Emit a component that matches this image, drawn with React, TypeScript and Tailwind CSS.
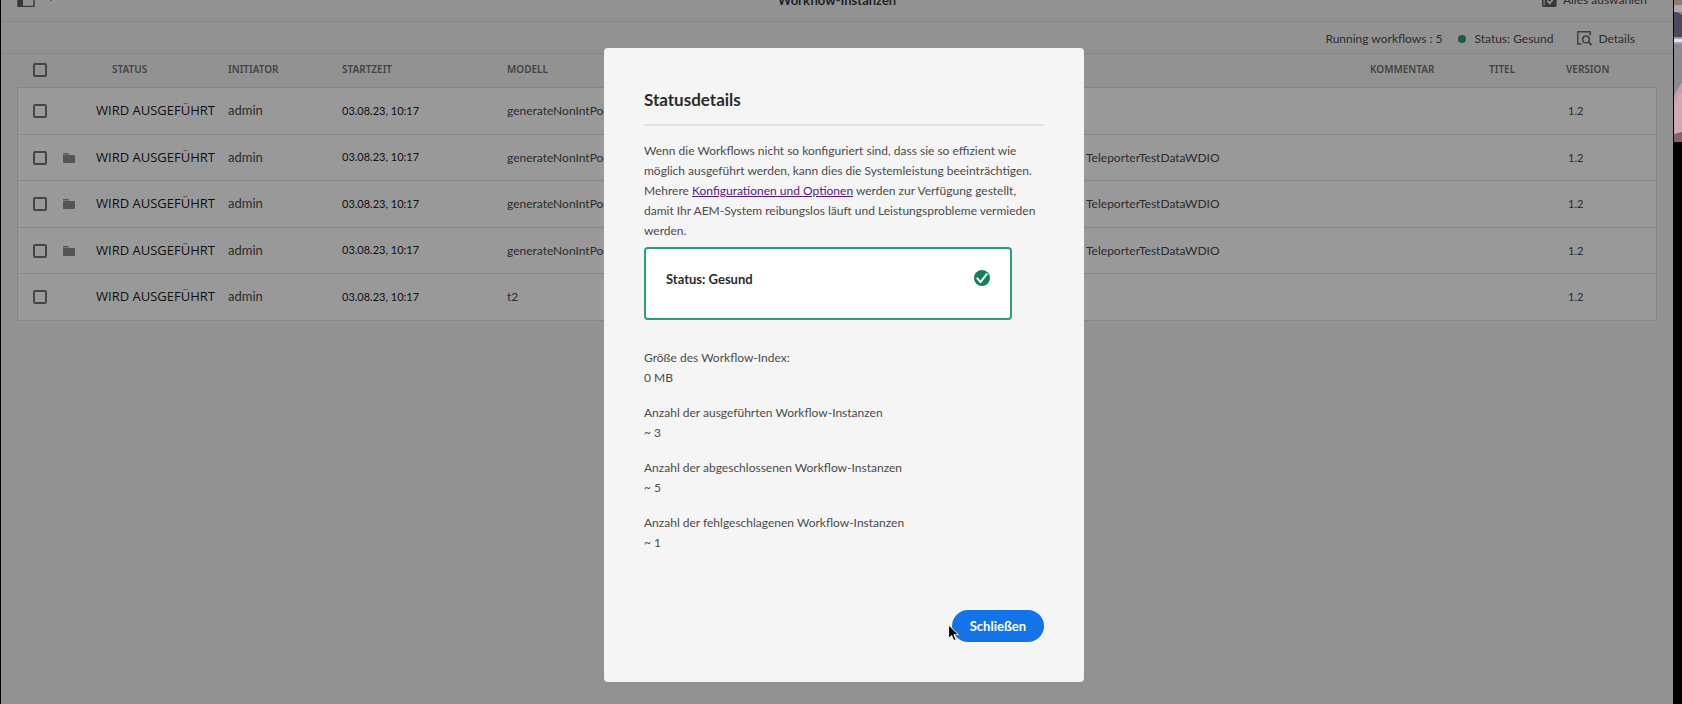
type Instance = {
  folder: boolean;
  model: string;
  payload: string;
};

const instances: Instance[] = [
  { folder: false, model: "generateNonIntPod", payload: "" },
  { folder: true, model: "generateNonIntPod", payload: "TeleporterTestDataWDIO" },
  { folder: true, model: "generateNonIntPod", payload: "TeleporterTestDataWDIO" },
  { folder: true, model: "generateNonIntPod", payload: "TeleporterTestDataWDIO" },
  { folder: false, model: "t2", payload: "" },
];

const stats = [
  { label: "Größe des Workflow-Index:", value: "0 MB" },
  { label: "Anzahl der ausgeführten Workflow-Instanzen", value: "~ 3" },
  { label: "Anzahl der abgeschlossenen Workflow-Instanzen", value: "~ 5" },
  { label: "Anzahl der fehlgeschlagenen Workflow-Instanzen", value: "~ 1" },
];

function FolderIcon() {
  return (
    <svg viewBox="0 0 12 10" className="h-2.5 w-3" fill="#8e8e8e" aria-hidden="true">
      <path d="M0 .8A.8.8 0 0 1 .8 0h4.4l1.3 1.4H0z" />
      <path d="M0 1.9h11.3a.7.7 0 0 1 .7.7v6.6a.8.8 0 0 1-.8.8H.8a.8.8 0 0 1-.8-.8z" />
    </svg>
  );
}

function Checkbox({ label }: { label: string }) {
  return (
    <input
      type="checkbox"
      aria-label={label}
      className="block size-3.5 appearance-none rounded-xs border-2 border-[#747474] bg-transparent"
    />
  );
}

function PageHeader() {
  return (
    <header className="h-[22px] overflow-hidden border-b border-[#dcdcdc]">
      <div className="-mt-2.5 grid h-5 grid-cols-3 items-center text-[13px] leading-5">
        <button type="button" aria-label="Leiste" className="flex items-center gap-3 justify-self-start pl-4">
          <svg viewBox="0 0 18 16" className="h-4 w-[18px]" aria-hidden="true">
            <path d="M1 1h16v13.4H1z" fill="none" stroke="#5c5c5c" strokeWidth="1.4" />
            <path d="M1 1h5v13.4H1z" fill="#5c5c5c" />
          </svg>
          <svg viewBox="0 0 8 5" className="-mt-1 h-[5px] w-2" aria-hidden="true">
            <path d="M1 .5 4 3.7 7 .5" fill="none" stroke="#5c5c5c" strokeWidth="1.8" />
          </svg>
        </button>
        <h1 className="justify-self-center font-bold text-[#3a3a3a]">Workflow-Instanzen</h1>
        <button type="button" className="flex items-center gap-1.5 justify-self-end pr-[26px] text-[12px] text-[#4b4b4b]">
          <svg viewBox="0 0 15 15" className="size-[15px]" aria-hidden="true">
            <path d="M0 2h1.6v10.4H10V14H1.5A1.5 1.5 0 0 1 0 12.5z" fill="#5c5c5c" />
            <rect x="2.6" y="1" width="12" height="13" rx="1.6" fill="#5c5c5c" />
            <path d="m5.2 7.6 2.6 2.8 4.6-6" fill="none" stroke="#f4f4f4" strokeWidth="1.7" />
          </svg>
          Alles auswählen
        </button>
      </div>
    </header>
  );
}

function StatusBar() {
  return (
    <div className="flex h-8 items-center justify-end border-b border-[#dcdcdc] pt-0.5 pr-[38px] text-[12px] text-[#4b4b4b]">
      <span>Running workflows : 5</span>
      <span className="ml-4 size-2 rounded-full bg-[#2d9d78]" />
      <span className="ml-2">Status: Gesund</span>
      <button type="button" className="ml-6 flex items-center gap-1.5">
        <svg viewBox="0 0 15 15" className="size-[15px]" fill="none" stroke="#6a6a6a" aria-hidden="true">
          <path d="M4.4 12.9H.8V.8h12.4v3.4" strokeWidth="1.5" />
          <circle cx="9" cy="8.4" r="3.3" strokeWidth="1.5" />
          <path d="m11.3 10.8 3.2 3.4" strokeWidth="1.9" />
        </svg>
        Details
      </button>
    </div>
  );
}

function InstanceTable() {
  return (
    <div className="px-4">
      <table className="w-full table-fixed border-separate border-spacing-0 text-left text-[12px] text-[#4b4b4b]">
        <colgroup>
          <col className="w-[46px]" />
          <col className="w-[33px]" />
          <col className="w-[132px]" />
          <col className="w-[114px]" />
          <col className="w-[165px]" />
          <col />
          <col className="w-[284px]" />
          <col className="w-[119px]" />
          <col className="w-[77px]" />
          <col className="w-[91px]" />
        </colgroup>
        <thead>
          <tr className="h-[34px] font-['Noto_Sans',sans-serif] text-[10px] text-[#707070] *:border-b *:border-[#dedede] *:px-0 *:pt-0 *:pb-0.5 *:font-semibold">
            <th className="rounded-tl">
              <div className="pl-4">
                <Checkbox label="Alle auswählen" />
              </div>
            </th>
            <th />
            <th>
              <span className="pl-4">STATUS</span>
            </th>
            <th>INITIATOR</th>
            <th>STARTZEIT</th>
            <th>MODELL</th>
            <th />
            <th>KOMMENTAR</th>
            <th>TITEL</th>
            <th>VERSION</th>
          </tr>
        </thead>
        <tbody>
          {instances.map((row, i) => (
            <tr
              key={i}
              className="bg-white odd:h-[47px] even:h-[46px] *:border-b *:border-[#e2e2e2] *:p-0 *:first:border-l *:last:border-r"
            >
              <td>
                <div className="pl-[15px]">
                  <Checkbox label={`Zeile ${i + 1}`} />
                </div>
              </td>
              <td>{row.folder && <FolderIcon />}</td>
              <td className="whitespace-nowrap font-['Open_Sans',sans-serif] text-[13px] text-[#1c1c1c]">
                WIRD AUSGEFÜHRT
              </td>
              <td className="text-[13px]">admin</td>
              <td className="text-[11px] text-[#222222]">03.08.23, 10:17</td>
              <td>{row.model}</td>
              <td>{row.payload}</td>
              <td />
              <td />
              <td>
                <span className="pl-0.5 text-[11px]">1.2</span>
              </td>
            </tr>
          ))}
        </tbody>
      </table>
    </div>
  );
}

function StatusDialog() {
  return (
    <section
      role="dialog"
      aria-modal="true"
      aria-labelledby="dialog-title"
      className="w-[480px] rounded bg-[#f5f5f5] p-10 text-[12px] leading-5 text-[#4b4b4b]"
    >
      <h2
        id="dialog-title"
        className="border-b-2 border-[#e1e1e1] pb-3 text-[17px] leading-6 font-bold text-[#2c2c2c]"
      >
        Statusdetails
      </h2>
      <p className="pt-[15px]">
        Wenn die Workflows nicht so konfiguriert sind, dass sie so effizient wie möglich ausgeführt werden, kann dies
        die Systemleistung beeinträchtigen. Mehrere{" "}
        <a href="#konfiguration" className="text-[#551a8b] underline">
          Konfigurationen und Optionen
        </a>{" "}
        werden zur Verfügung gestellt, damit Ihr AEM-System reibungslos läuft und Leistungsprobleme vermieden werden.
      </p>
      <div className="mt-1.5 mr-8 flex h-[73px] items-start justify-between rounded border-2 border-[#2d9d78] bg-white px-5 pt-5">
        <strong className="text-[13px] text-[#2c2c2c]">Status: Gesund</strong>
        <svg viewBox="0 0 16 16" className="mt-px size-4" aria-hidden="true">
          <circle cx="8" cy="8" r="8" fill="#12805c" />
          <path d="m3.3 8.4 3.2 3.7 6.2-8" fill="none" stroke="#ffffff" strokeWidth="2" strokeLinecap="round" strokeLinejoin="round" />
        </svg>
      </div>
      <dl className="mt-7 flex flex-col gap-[15px]">
        {stats.map((s) => (
          <div key={s.label}>
            <dt>{s.label}</dt>
            <dd>{s.value}</dd>
          </div>
        ))}
      </dl>
      <div className="mt-[57px] flex justify-end">
        <div className="relative">
          <button type="button" className="h-8 rounded-full bg-[#1473e6] px-[18px] text-[13px] font-bold text-white">
            Schließen
          </button>
          <svg viewBox="0 0 12 19" className="absolute top-3.5 -left-1 h-[19px] w-3" aria-hidden="true">
            <path
              d="M.6 1v13.4l3-2.8 2.2 5 2.3-1-2.2-4.9h4.6z"
              fill="#0a0a0a"
              stroke="#ffffff"
              strokeWidth="0.9"
            />
          </svg>
        </div>
      </div>
    </section>
  );
}

function CameraPreview() {
  return (
    <aside className="w-[9px] pl-px">
      <svg viewBox="0 0 8 142" preserveAspectRatio="none" className="h-[142px] w-full" aria-hidden="true">
        <rect width="8" height="142" fill="#8b8a92" />
        <rect width="8" height="6" fill="#8d7b7c" />
        <rect y="5" width="8" height="7" fill="#b0a9af" />
        <path d="M0 12q5 0 8 3v22H0z" fill="#4b4a5c" />
        <rect y="37" width="8" height="2" fill="#9c9cab" />
        <rect y="39" width="8" height="3" fill="#e4e3ee" />
        <rect y="42" width="8" height="2" fill="#a5a3b1" />
        <path d="M8 82v60H0V96z" fill="#c79fac" />
        <path d="M8 92v40L0 134V104z" fill="#d0a9b4" />
        <path d="M0 134l8-2v10H0z" fill="#8a5f6e" />
      </svg>
    </aside>
  );
}

export default function App() {
  return (
    <div className="flex min-h-screen bg-black pl-px font-['Lato',sans-serif]">
      <main className="relative min-w-0 flex-1 bg-[#f4f4f4]">
        <PageHeader />
        <StatusBar />
        <InstanceTable />
        <div className="absolute inset-0 flex items-start justify-center bg-black/40 pt-12 pl-[14px]">
          <StatusDialog />
        </div>
      </main>
      <CameraPreview />
    </div>
  );
}
